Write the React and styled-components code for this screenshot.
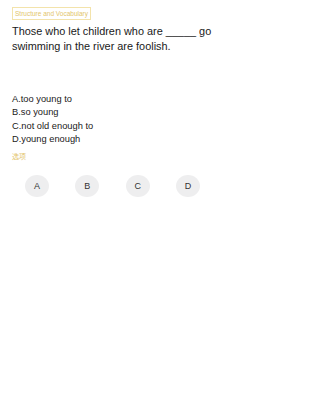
import React from 'react';
import styled, { createGlobalStyle } from 'styled-components';

const GlobalStyle = createGlobalStyle`
    * {
        box-sizing: border-box;
    }
    body {
        margin: 0;
        background: #fff;
        font-family: "Liberation Sans", "Noto Sans CJK SC", sans-serif;
    }
`;

const Page = styled.div`
    width: 225px;
    min-height: 400px;
    padding: 7px 12px 0 12px;
    background: #fff;
`;

const Tag = styled.div`
    width: fit-content;
    height: 13px;
    padding: 0 2px;
    border: 1px solid #f3e3ab;
    color: #e3c56b;
    font-size: 6.5px;
    line-height: 11px;
`;

const Question = styled.p`
    margin: 4px 0 0 0;
    color: #1a1a1a;
    font-size: 10.9px;
    line-height: 15px;
`;

const Options = styled.ul`
    list-style: none;
    margin: 38.5px 0 0 0;
    padding: 0;
`;

const Option = styled.li`
    color: #1a1a1a;
    font-size: 9.3px;
    line-height: 13.5px;
`;

const Hint = styled.div`
    margin-top: 5.5px;
    color: #e3c56b;
    font-size: 7px;
    line-height: 10px;
`;

const Choices = styled.div`
    display: grid;
    grid-template-columns: repeat(4, 1fr);
    margin-top: 13px;
    justify-items: center;
`;

const Choice = styled.button`
    width: 24px;
    height: 22px;
    border: none;
    border-radius: 50%;
    padding: 0;
    background: #eeeeef;
    color: #333;
    font-family: "Liberation Sans", sans-serif;
    font-size: 9px;
`;

const options = [
    'A.too young to',
    'B.so young',
    'C.not old enough to',
    'D.young enough',
];

const App = () => (
    <Page>
        <GlobalStyle />
        <Tag>Structure and Vocabulary</Tag>
        <Question>Those who let children who are _____ go swimming in the river are foolish.</Question>
        <Options>
            {options.map((text) => (
                <Option key={text}>{text}</Option>
            ))}
        </Options>
        <Hint>选项</Hint>
        <Choices>
            {['A', 'B', 'C', 'D'].map((letter) => (
                <Choice key={letter}>{letter}</Choice>
            ))}
        </Choices>
    </Page>
);

export default App;
